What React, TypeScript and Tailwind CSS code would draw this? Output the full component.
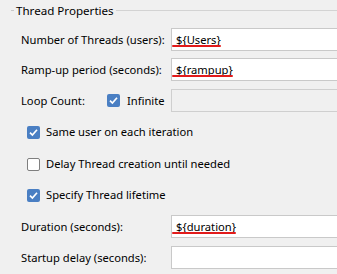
import React from "react";

const Check = ({ checked }: { checked: boolean }) =>
  checked ? (
    <div className="w-[13px] h-[13px] rounded-[2px] bg-[#4a7fc3] flex items-center justify-center shrink-0">
      <svg width="11" height="11" viewBox="0 0 11 11">
        <path d="M2 5.6 L4.4 8 L9 2.8" stroke="#fff" strokeWidth="1.7" fill="none" />
      </svg>
    </div>
  ) : (
    <div className="w-[13px] h-[13px] rounded-[2px] bg-white border border-[#7f7f7f] shrink-0" />
  );

const Field = ({ label, value, mt }: { label: string; value?: string; mt: string }) => (
  <div className={`flex items-center h-[23px] ${mt}`}>
    <div className="w-[150px] shrink-0 whitespace-nowrap">{label}</div>
    <div className="w-[180px] h-[23px] shrink-0 border border-[#c9c9c9] bg-white flex items-center pl-[4px]">
      {value && (
        <span className="relative whitespace-nowrap">
          {value}
          <span className="absolute left-[-4px] right-0 bottom-[-2px] h-[2px] bg-[#e21b1b] rounded" />
        </span>
      )}
    </div>
  </div>
);

export default function App() {
  return (
    <div
      className="w-[337px] h-[274px] overflow-hidden bg-[#f0f0f0] text-[11.2px] text-black leading-none whitespace-nowrap"
      style={{ fontFamily: '"Segoe UI", "Noto Sans", sans-serif' }}
    >
      <div className="flex items-center h-[21px]">
        <div className="ml-[11px] w-[3px] h-px bg-[#c8c8c8]" />
        <div className="px-[2px] text-[11.6px]">Thread Properties</div>
        <div className="flex-1 h-px bg-[#d3d3d3]" />
      </div>
      <div className="pl-[21px]">
        <Field label="Number of Threads (users):" value="${Users}" mt="mt-[7px]" />
        <Field label="Ramp-up period (seconds):" value="${rampup}" mt="mt-[7px]" />
        <div className="flex items-center h-[23px] mt-[8px]">
          <div className="w-[86px] shrink-0">Loop Count:</div>
          <Check checked />
          <div className="w-[51px] pl-[7px] shrink-0">Infinite</div>
          <div className="w-[180px] h-[23px] shrink-0 border border-[#cfcfcf] bg-[#f0f0f0]" />
        </div>
        <div className="pl-[6px]">
          <div className="flex items-center h-[14px] mt-[13px] gap-[6px]">
            <Check checked />
            <span>Same user on each iteration</span>
          </div>
          <div className="flex items-center h-[14px] mt-[18px] gap-[6px]">
            <Check checked={false} />
            <span>Delay Thread creation until needed</span>
          </div>
          <div className="flex items-center h-[14px] mt-[17px] gap-[6px]">
            <Check checked />
            <span>Specify Thread lifetime</span>
          </div>
        </div>
        <Field label="Duration (seconds):" value="${duration}" mt="mt-[13px]" />
        <Field label="Startup delay (seconds):" mt="mt-[8px]" />
      </div>
    </div>
  );
}
